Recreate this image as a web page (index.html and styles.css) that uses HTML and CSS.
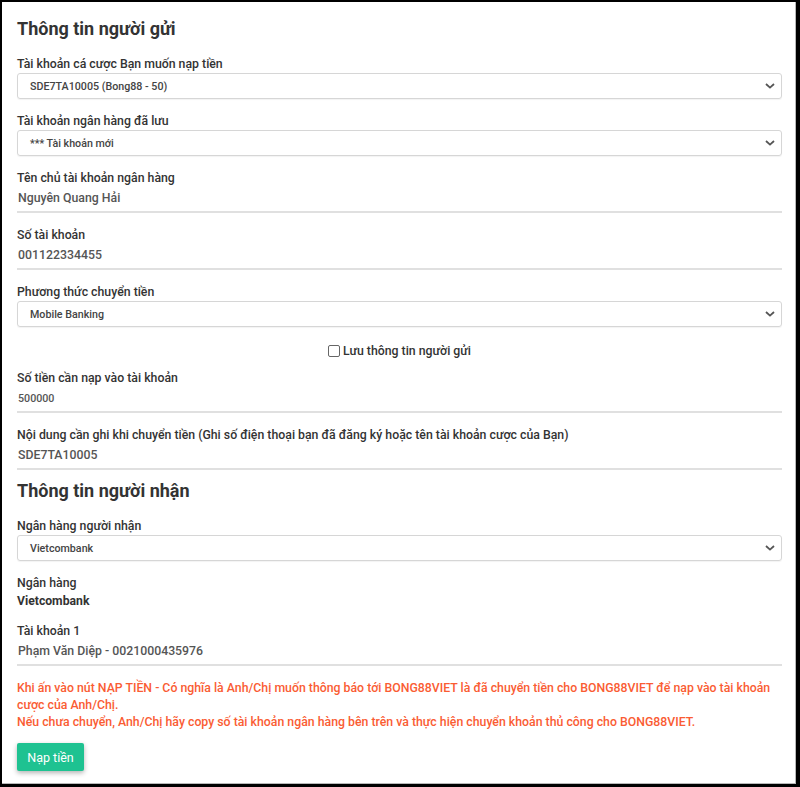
FILE: index.html
```html
<!DOCTYPE html>
<html lang="vi">
<head>
<meta charset="utf-8">
<title>Nạp tiền</title>
<link rel="stylesheet" href="styles.css">
</head>
<body>
<div class="frame">
  <div class="panel">
    <section class="section">
      <h2 class="title">Thông tin người gửi</h2>
      <div class="group">
        <div class="label">Tài khoản cá cược Bạn muốn nạp tiền</div>
        <div class="select"><span>SDE7TA10005 (Bong88 - 50)</span><svg class="chev" width="10" height="6" viewBox="0 0 10 6"><path d="M1 1l4 3.6L9 1" fill="none" stroke="#555" stroke-width="1.8"/></svg></div>
      </div>
      <div class="group">
        <div class="label">Tài khoản ngân hàng đã lưu</div>
        <div class="select"><span>*** Tài khoản mới</span><svg class="chev" width="10" height="6" viewBox="0 0 10 6"><path d="M1 1l4 3.6L9 1" fill="none" stroke="#555" stroke-width="1.8"/></svg></div>
      </div>
      <div class="group">
        <div class="label">Tên chủ tài khoản ngân hàng</div>
        <div class="input">Nguyên Quang Hải</div>
      </div>
      <div class="group">
        <div class="label">Số tài khoản</div>
        <div class="input">001122334455</div>
      </div>
      <div class="group">
        <div class="label">Phương thức chuyển tiền</div>
        <div class="select"><span>Mobile Banking</span><svg class="chev" width="10" height="6" viewBox="0 0 10 6"><path d="M1 1l4 3.6L9 1" fill="none" stroke="#555" stroke-width="1.8"/></svg></div>
      </div>
      <div class="check-row">
        <span class="checkbox"></span><span>Lưu thông tin người gửi</span>
      </div>
      <div class="group">
        <div class="label">Số tiền cần nạp vào tài khoản</div>
        <div class="input small">500000</div>
      </div>
      <div class="group">
        <div class="label">Nội dung cần ghi khi chuyển tiền (Ghi số điện thoại bạn đã đăng ký hoặc tên tài khoản cược của Bạn)</div>
        <div class="input">SDE7TA10005</div>
      </div>
    </section>
    <section class="section second">
      <h2 class="title">Thông tin người nhận</h2>
      <div class="group">
        <div class="label">Ngân hàng người nhận</div>
        <div class="select"><span>Vietcombank</span><svg class="chev" width="10" height="6" viewBox="0 0 10 6"><path d="M1 1l4 3.6L9 1" fill="none" stroke="#555" stroke-width="1.8"/></svg></div>
      </div>
      <div class="group">
        <div class="label">Ngân hàng</div>
        <div class="info">Vietcombank</div>
      </div>
      <div class="group">
        <div class="label">Tài khoản 1</div>
        <div class="input">Phạm Văn Diệp - 0021000435976</div>
      </div>
      <p class="notice"><span class="nowrap">Khi ấn vào nút NẠP TIỀN - Có nghĩa là Anh/Chị muốn thông báo tới BONG88VIET là đã chuyển tiền cho BONG88VIET để nạp vào tài khoản</span><br>cược của Anh/Chị.<br>Nếu chưa chuyển, Anh/Chị hãy copy số tài khoản ngân hàng bên trên và thực hiện chuyển khoản thủ công cho BONG88VIET.</p>
      <button class="btn" type="button">Nạp tiền</button>
    </section>
  </div>
</div>
</body>
</html>
```
FILE: styles.css
```css
* { box-sizing: border-box; }
html, body { margin: 0; padding: 0; background: #000; }
body { font-family: Roboto, "Noto Sans", "Liberation Sans", sans-serif; color: #333; }
.frame {
  width: 800px;
  height: 787px;
  border-style: solid;
  border-color: #000;
  border-width: 2px 4px 3px 2px;
  background: #000;
}
.panel {
  height: 100%;
  background: #fff;
  border-right: 1px solid #b8b8b8;
  border-bottom: 1px solid #b8b8b8;
  padding: 16px 13px 0 15px;
}
.section.second { margin-top: 10px; }
.title {
  margin: 0 0 16px;
  font-size: 18px;
  line-height: 22px;
  font-weight: 700;
  color: #333;
}
.group { margin-bottom: 14px; }
.section > .group:last-child { margin-bottom: 0; }
.label {
  font-size: 12.3px;
  line-height: 16px;
  font-weight: 500;
  color: #333;
  margin-bottom: 1px;
}
.select {
  margin-top: 1px;
  height: 26px;
  border: 1px solid #d6d6d6;
  border-radius: 3px;
  display: flex;
  align-items: center;
  justify-content: space-between;
  padding: 0 6px 0 12px;
  font-size: 10.7px;
  font-weight: 500;
  color: #444;
  box-shadow: 0 1px 1px rgba(0,0,0,0.05);
}
.chev { display: block; }
.input {
  height: 26px;
  border-bottom: 2px solid #e0e0e0;
  font-size: 12.3px;
  line-height: 23px;
  font-weight: 500;
  color: #555;
  padding-left: 1px;
}
.input.small { font-size: 10.7px; }
.info {
  margin-top: 2px;
  font-size: 12.2px;
  line-height: 16px;
  font-weight: 700;
  color: #333;
}
.check-row {
  height: 20px;
  margin-bottom: 9px;
  display: flex;
  align-items: center;
  justify-content: center;
  gap: 3px;
  font-size: 12.3px;
  font-weight: 500;
  color: #333;
}
.checkbox {
  width: 12px;
  height: 12px;
  border: 1px solid #666;
  border-radius: 2px;
  background: #fff;
}
.notice {
  margin: 11px 0 12px;
  font-size: 12.3px;
  line-height: 17px;
  font-weight: 500;
  color: #fa5c33;
}
.nowrap { white-space: nowrap; }
.btn {
  display: block;
  width: 67px;
  height: 28px;
  border: 0;
  border-radius: 2px;
  background: #1ec291;
  color: #fff;
  font-family: Roboto, "Noto Sans", "Liberation Sans", sans-serif;
  font-size: 12.5px;
  font-weight: 400;
  padding: 0;
  box-shadow: 0 2px 5px rgba(0,0,0,0.3);
}
```
